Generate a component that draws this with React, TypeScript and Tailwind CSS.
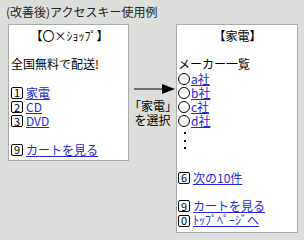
// App.tsx
import React from 'react'

const font = { fontFamily: '"Noto Sans CJK JP", "Noto Sans", sans-serif' }

function Key({ n }: { n: string }) {
  return (
    <span className="flex w-[12px] h-[12px] mr-[3px] shrink-0 items-center justify-center border border-black rounded-[2px] text-[11px] leading-none">
      {n}
    </span>
  )
}

function Circle() {
  return <span className="w-[12px] h-[12px] mr-[1px] shrink-0 rounded-full border border-black" />
}

function Link({ children }: { children: React.ReactNode }) {
  return <span className="text-[#2727d6] underline underline-offset-[1px]">{children}</span>
}

function Line({ children }: { children?: React.ReactNode }) {
  return <div className="flex items-center h-[14.2px] whitespace-nowrap">{children}</div>
}

export default function App() {
  return (
    <div className="w-[304px] h-[240px] bg-[#dcdedc] text-black text-[12px] leading-[14.2px] overflow-hidden" style={font}>
      <div className="pl-[6px] pt-[5px] h-[24px] text-[#222]">(改善後)アクセスキー使用例</div>

      <div className="flex items-start">
        {/* before: shop top */}
        <div className="ml-[8px] w-[121px] h-[137px] bg-white border border-[#a9a9a9] pl-[2px] pt-[4px]">
          <Line><div className="w-full text-center">【〇×ｼｮｯﾌﾟ】</div></Line>
          <Line />
          <Line>全国無料で配送!</Line>
          <Line />
          <Line><Key n="1" /><Link>家電</Link></Line>
          <Line><Key n="2" /><Link>CD</Link></Line>
          <Line><Key n="3" /><Link>DVD</Link></Line>
          <Line />
          <Line><Key n="9" /><Link>カートを見る</Link></Line>
        </div>

        {/* arrow */}
        <div className="w-[47px] pt-[59px] flex flex-col items-center">
          <svg width="42" height="12" viewBox="0 0 42 12" className="ml-[4px]">
            <line x1="0" y1="6" x2="30" y2="6" stroke="black" strokeWidth="1" />
            <polygon points="28,1 41,6 28,11" fill="black" />
          </svg>
          <div className="mt-[4px] text-center">
            <div>「家電」</div>
            <div>を選択</div>
          </div>
        </div>

        {/* after: category page */}
        <div className="w-[122px] h-[209px] bg-white border border-[#a9a9a9] pl-[1px] pt-[4px]">
          <Line><div className="w-full text-center">【家電】</div></Line>
          <Line />
          <Line>メーカー一覧</Line>
          <Line><Circle /><Link>a社</Link></Line>
          <Line><Circle /><Link>b社</Link></Line>
          <Line><Circle /><Link>c社</Link></Line>
          <Line><Circle /><Link>d社</Link></Line>
          <div className="h-[28.4px] pl-[6px] pt-[4px] flex flex-col gap-[5.5px]">
            <span className="w-[2px] h-[2px] bg-black" />
            <span className="w-[2px] h-[2px] bg-black" />
            <span className="w-[2px] h-[2px] bg-black" />
          </div>
          <Line />
          <Line><Key n="6" /><Link>次の10件</Link></Line>
          <Line />
          <Line><Key n="9" /><Link>カートを見る</Link></Line>
          <Line><Key n="0" /><Link>ﾄｯﾌﾟﾍﾟｰｼﾞへ</Link></Line>
        </div>
      </div>
    </div>
  )
}
